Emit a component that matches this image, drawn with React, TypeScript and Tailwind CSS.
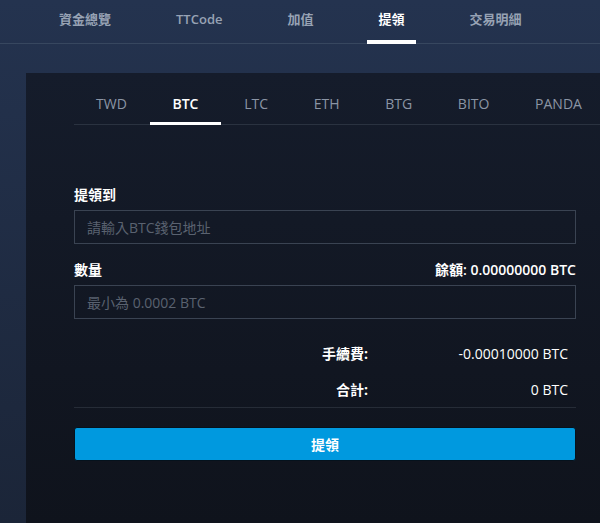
import { useState } from "react";

const navItems = ["資金總覽", "TTCode", "加值", "提領", "交易明細"];
const coins = ["TWD", "BTC", "LTC", "ETH", "BTG", "BITO", "PANDA"];

const font = {
  fontFamily: '"Open Sans", "Noto Sans CJK TC", sans-serif',
};

export default function App() {
  const [coin, setCoin] = useState("BTC");

  return (
    <div
      className="w-[600px] h-[523px] overflow-hidden flex flex-col bg-gradient-to-b from-[#24334f] to-[#1b2538]"
      style={font}
    >
      {/* top nav */}
      <div className="h-[44px] shrink-0 border-b border-[#37475f] flex items-start pl-[48px] gap-[43px]">
        {navItems.map((item) => {
          const active = item === "提領";
          return (
            <div
              key={item}
              className={
                "h-[44px] px-[11px] flex items-center border-b-4 text-[13px] font-semibold " +
                (active
                  ? "border-white text-white"
                  : "border-transparent text-[#97a2b4]")
              }
            >
              {item}
            </div>
          );
        })}
      </div>

      {/* panel */}
      <div className="flex-1 mt-[29px] ml-[26px] pt-[11px] pl-[48px] bg-gradient-to-b from-[#151c2b] to-[#0f131c]">
        <div className="h-[41px] border-b border-[#2a3240] flex items-start gap-[1.7px]">
          {coins.map((c) => {
            const active = c === coin;
            return (
              <button
                key={c}
                onClick={() => setCoin(c)}
                className={
                  "h-[41px] px-[22px] flex items-center border-b-[3px] text-[14px] " +
                  (active
                    ? "border-white text-white font-semibold"
                    : "border-transparent text-[#8b95a5]")
                }
              >
                {c}
              </button>
            );
          })}
        </div>

        <div className="mr-[24px] pt-[59px]">
          <div className="h-[20px] flex items-center text-[14px] font-bold text-white">
            提領到
          </div>
          <input
            className="mt-[6px] w-full h-[34px] px-[12px] bg-transparent border border-[#3a4352] text-[14px] text-white placeholder:text-[#5a6270] outline-none"
            placeholder={`請輸入${coin}錢包地址`}
          />

          <div className="mt-[15px] h-[20px] flex items-center justify-between text-[14px] font-bold text-white">
            <span>數量</span>
            <span className="font-semibold">餘額: 0.00000000 {coin}</span>
          </div>
          <input
            className="mt-[6px] w-full h-[34px] px-[12px] bg-transparent border border-[#3a4352] text-[14px] text-white placeholder:text-[#5a6270] outline-none"
            placeholder={`最小為 0.0002 ${coin}`}
          />

          <div className="mt-[16px] border-b border-[#262c37] text-[14px] text-white">
            <div className="h-[36px] grid grid-cols-[294px_1fr] items-center">
              <span className="text-right font-bold">手續費:</span>
              <span className="text-right pr-[8px]">-0.00010000 {coin}</span>
            </div>
            <div className="h-[36px] grid grid-cols-[294px_1fr] items-center">
              <span className="text-right font-bold">合計:</span>
              <span className="text-right pr-[8px]">0 {coin}</span>
            </div>
          </div>

          <button className="mt-[19px] w-full h-[34px] rounded-[3px] border border-[#05121d] bg-[#0099df] text-[14px] font-bold text-white">
            提領
          </button>
        </div>
      </div>
    </div>
  );
}
